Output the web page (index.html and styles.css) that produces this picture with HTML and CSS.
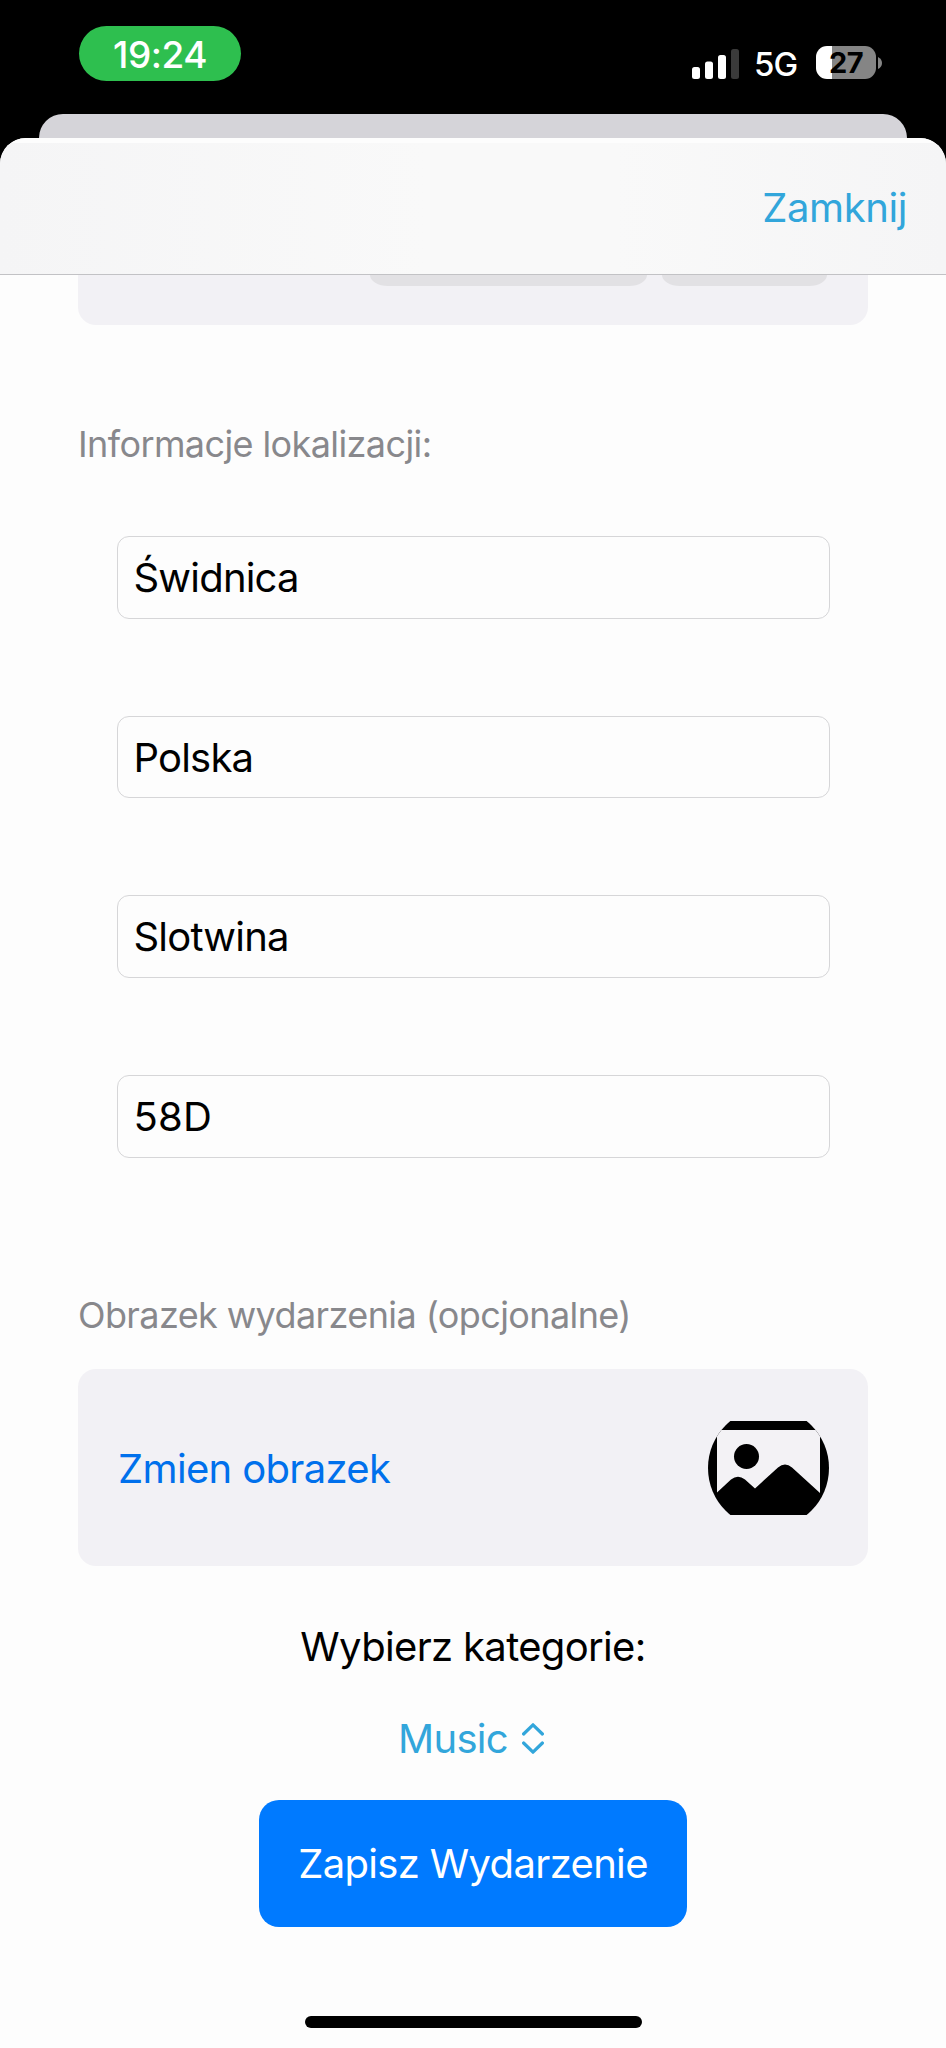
FILE: index.html
```html
<!DOCTYPE html>
<html lang="pl">
<head>
<meta charset="utf-8">
<title>Wydarzenie</title>
<link rel="stylesheet" href="styles.css">
</head>
<body>
<div class="phone">
  <header class="status">
    <div class="time"><span>19:24</span></div>
    <div class="indicators">
      <svg class="signal" width="48" height="30" viewBox="0 0 48 30">
        <rect x="0" y="18" width="8" height="12" rx="2.5" fill="#fff"/>
        <rect x="13" y="12.500" width="8" height="17.500" rx="2.500" fill="#fff"/>
        <rect x="26" y="6" width="8" height="24" rx="2.500" fill="#fff"/>
        <rect x="39" y="0" width="8" height="30" rx="2.500" fill="#3a3a3a"/>
      </svg>
      <span class="network">5G</span>
      <div class="battery"><span class="level">27</span></div>
      <svg class="tip" width="4" height="12" viewBox="0 0 4 12"><path d="M0 0Q4 2 4 6T0 12Z" fill="#858585"/></svg>
    </div>
  </header>
  <div class="behind"></div>
  <main class="sheet">
    <nav class="nav"><a class="close">Zamknij</a></nav>
    <section class="dates"><span class="chip chip-date"></span><span class="chip chip-time"></span></section>
    <h2 class="label label-location">Informacje lokalizacji:</h2>
    <div class="fields">
      <div class="field">Świdnica</div>
      <div class="field">Polska</div>
      <div class="field">Slotwina</div>
      <div class="field field-number">58D</div>
    </div>
    <h2 class="label label-image">Obrazek wydarzenia (opcjonalne)</h2>
    <section class="picker">
      <a class="change">Zmien obrazek</a>
      <svg class="thumb" width="121" height="94" viewBox="0 0 121 94">
        <defs><clipPath id="round"><circle cx="60.500" cy="47" r="60.500"/></clipPath></defs>
        <g clip-path="url(#round)">
          <rect width="121" height="94" fill="#000"/>
          <path d="M9 9H112V72L84 46.500Q77 40.500 70 46.500L47 67.500L37 58.500Q30 53 23 58.500L9 71.500Z" fill="#f3f2f5"/>
          <circle cx="38.500" cy="35.500" r="12.500" fill="#000"/>
        </g>
      </svg>
    </section>
    <p class="category">Wybierz kategorie:</p>
    <div class="select">
      <span class="value">Music</span>
      <svg width="22" height="31" viewBox="0 0 22 31" fill="none" stroke="#32a6db" stroke-width="3.200" stroke-linecap="round" stroke-linejoin="round"><path d="M1.600 11L11 1.800L20.400 11M1.600 20L11 29.200L20.400 20"/></svg>
    </div>
    <button class="save">Zapisz Wydarzenie</button>
    <div class="home"></div>
  </main>
</div>
</body>
</html>
```
FILE: styles.css
```css
* { box-sizing: border-box; }
body { margin: 0; background: #000; font-family: Inter, "Liberation Sans", sans-serif; font-size: 40px; line-height: 48px; letter-spacing: -0.66px; color: #000; }
.phone { width: 946px; height: 2048px; overflow: hidden; background: #000; display: flex; flex-direction: column; align-items: center; }
.status { width: 100%; height: 114px; padding: 26px 65px 0 79px; display: flex; justify-content: space-between; align-items: flex-start; }
.time { width: 162px; height: 55px; border-radius: 28px; background: #2ebf4f; color: #fff; font-size: 37px; line-height: 57px; font-weight: 500; text-align: center; letter-spacing: -0.5px; }
.indicators { display: flex; align-items: center; height: 33px; margin-top: 20px; }
.signal { margin-top: 2px; }
.network { width: 48px; margin-left: 14px; margin-top: 2px; color: #fff; font-size: 33px; font-weight: 500; letter-spacing: -0.8px; }
.battery { width: 60px; height: 33px; margin-left: 14px; border-radius: 11px; background: linear-gradient(90deg, #fff 16px, #858585 16px); text-align: center; }
.level { display: block; font-size: 29px; line-height: 34px; font-weight: 700; letter-spacing: -0.5px; }
.tip { margin-left: 2px; margin-right: -1px; }
.behind { width: 868px; height: 24px; flex: none; border-radius: 24px 24px 0 0; background: #d5d4d9; }
.sheet { width: 946px; flex: 1; background: #fdfdfd; border-radius: 26px 26px 0 0; overflow: hidden; display: flex; flex-direction: column; align-items: center; }
.nav { width: 100%; height: 137px; flex: none; border-top: 5px solid #fdfdfd; border-bottom: 1px solid #c2c2c5; background: linear-gradient(90deg, #f5f5f6, #f9f9f9 45%, #f9f9f9 65%, #f5f5f6); padding: 41px 39px 0 0; text-align: right; letter-spacing: -0.4px; color: #32a6db; }
.dates { width: 790px; height: 50px; flex: none; border-radius: 0 0 18px 18px; background: #f2f1f5; display: flex; justify-content: flex-end; gap: 15px; padding-right: 41px; }
.chip { height: 11px; border-radius: 0 0 18px 18px / 0 0 11px 11px; background: #e2e1e4; }
.chip-date { width: 277px; }
.chip-time { width: 165px; }
.label { width: 790px; height: 44px; margin: 0; flex: none; font-size: 36px; line-height: 44px; font-weight: 400; letter-spacing: -0.6px; color: #88888c; white-space: nowrap; }
.label-location { margin-top: 97px; }
.fields { width: 713px; margin-top: 70px; display: grid; gap: 97px; }
.field { height: 82.700px; border: 1.500px solid #d6d6d8; border-radius: 12px; padding-left: 16px; line-height: 82px; letter-spacing: -0.8px; }
.field-number { letter-spacing: 0.2px; }
.label-image { margin-top: 135px; }
.picker { width: 790px; height: 197px; margin-top: 32px; flex: none; border-radius: 18px; background: #f2f1f5; display: flex; justify-content: space-between; align-items: center; padding: 2px 39px 0 40px; color: #0070ec; }
.change { padding-top: 2px; }
.category { margin: 57px 0 0; white-space: nowrap; }
.select { margin-top: 44px; padding-right: 4px; display: flex; align-items: center; gap: 14px; color: #32a6db; }
.save { width: 428px; height: 127px; margin-top: 37px; flex: none; border: 0; border-radius: 20px; background: #007aff; color: #fff; font: inherit; letter-spacing: inherit; white-space: nowrap; padding: 2px 0 0; }
.home { width: 337px; height: 12px; margin-top: 89px; border-radius: 6px; background: #000; }
```
